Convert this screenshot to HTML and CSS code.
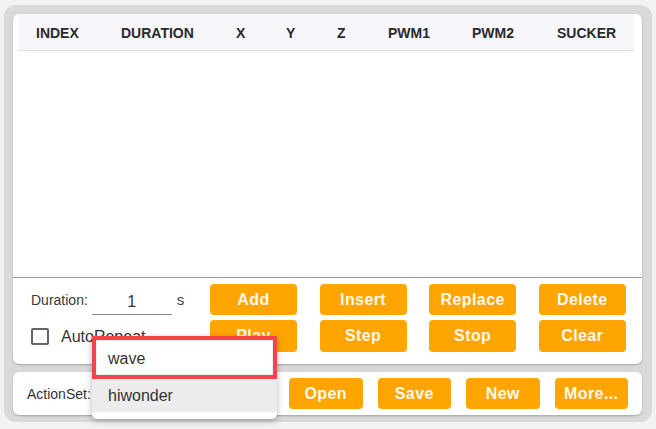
FILE: index.html
```html
<!DOCTYPE html>
<html>
<head>
<meta charset="utf-8">
<link rel="stylesheet" href="styles.css">
</head>
<body>
<div class="outer">
  <div class="card main">
    <div class="table-wrap">
      <div class="thead">
        <span>INDEX</span><span>DURATION</span><span>X</span><span>Y</span><span>Z</span><span>PWM1</span><span>PWM2</span><span>SUCKER</span>
      </div>
    </div>
    <div class="controls">
      <div class="dur">
        <span class="lbl">Duration:</span>
        <span class="inp">1</span>
        <span class="unit">s</span>
      </div>
      <button class="btn">Add</button>
      <button class="btn">Insert</button>
      <button class="btn">Replace</button>
      <button class="btn">Delete</button>
      <div class="auto">
        <span class="check"></span>
        <span class="autolbl">AutoRepeat</span>
      </div>
      <button class="btn">Play</button>
      <button class="btn">Step</button>
      <button class="btn">Stop</button>
      <button class="btn">Clear</button>
    </div>
  </div>
  <div class="card bar">
    <span class="setlbl">ActionSet:</span>
    <div class="barbtns">
      <button class="btn sm">Open</button>
      <button class="btn sm">Save</button>
      <button class="btn sm">New</button>
      <button class="btn sm">More...</button>
    </div>
  </div>
</div>
<div class="dropdown">
  <div class="opt sel">wave</div>
  <div class="opt hov">hiwonder</div>
</div>
</body>
</html>
```

FILE: styles.css
```css
* { box-sizing: border-box; }
html, body { margin: 0; padding: 0; }
body {
  background: #f2f2f4;
  font-family: "Liberation Sans", Arial, sans-serif;
  color: #333;
  width: 656px;
  height: 429px;
  overflow: hidden;
  position: relative;
}
.outer {
  margin: 5px 4px 0 4px;
  padding: 9px 10px 7px 9px;
  background: #d9d9d9;
  border-radius: 12px;
  display: flex;
  flex-direction: column;
  gap: 8px;
}
.card {
  background: #fff;
  border-radius: 6px;
  box-shadow: 0 1px 2px rgba(0,0,0,0.25);
}
.table-wrap {
  height: 264px;
  padding: 0 8px 0 5px;
  border-bottom: 1px solid #9c9c9c;
}
.thead {
  height: 37px;
  background: #f7f6fa;
  border-bottom: 1px solid #dedede;
  display: grid;
  grid-template-columns: 85px 115px 50px 51px 51px 84px 85px 1fr;
  align-items: center;
  padding-left: 18px;
  font-weight: bold;
  font-size: 14px;
  color: #2a2a2a;
  padding-top: 1px;
}
.controls {
  display: grid;
  grid-template-columns: 174.4px repeat(4, 87px);
  column-gap: 22.6px;
  row-gap: 5px;
  grid-auto-rows: 31px;
  padding: 6px 0 13px;
}
.controls .btn:nth-child(n+7) { height: 32px; }
.btn {
  border: none;
  background: #ffa500;
  color: #fff9ef;
  font-family: "Liberation Sans", Arial, sans-serif;
  font-weight: bold;
  font-size: 16px;
  letter-spacing: 0.4px;
  border-radius: 4px;
  padding: 0;
  height: 31px;
}
.dur {
  display: flex;
  align-items: center;
  padding-left: 18px;
}
.lbl { font-size: 14px; color: #3a3a3a; }
.inp {
  width: 80px;
  flex: none;
  margin-left: 4px;
  text-align: center;
  font-size: 16px;
  border-bottom: 1px solid #8a8a8a;
  padding: 2px 0 3px;
  margin-top: 7px;
  color: #333;
}
.unit { font-size: 15px; margin-left: 5px; color: #444; }
.auto {
  display: flex;
  align-items: center;
  padding-left: 18px;
  padding-top: 2px;
}
.check {
  width: 18px;
  height: 17px;
  flex: none;
  border: 2px solid #666;
  border-radius: 2px;
}
.autolbl { font-size: 16px; margin-left: 12px; color: #333; white-space: nowrap; }
.bar {
  height: 43px;
  display: flex;
  align-items: center;
  padding: 0 14px;
}
.setlbl { font-size: 14px; color: #333; }
.barbtns {
  margin-left: auto;
  display: flex;
  gap: 15px;
}
.btn.sm { width: 73.5px; }
.dropdown {
  position: absolute;
  left: 92px;
  top: 336px;
  width: 185px;
  height: 83px;
  background: #fff;
  border-radius: 2px 2px 5px 5px;
  box-shadow: 0 2px 6px rgba(0,0,0,0.3);
}
.opt {
  font-size: 16px;
  color: #333;
  padding-left: 16px;
  display: flex;
  align-items: center;
}
.opt.sel {
  height: 43px;
  border: 4px solid #f2454a;
  padding-left: 12px;
  padding-top: 2px;
  box-shadow: inset 0 0 2px rgba(0,0,0,0.25);
}
.opt.hov {
  height: 33px;
  background: #ececef;
}
```
